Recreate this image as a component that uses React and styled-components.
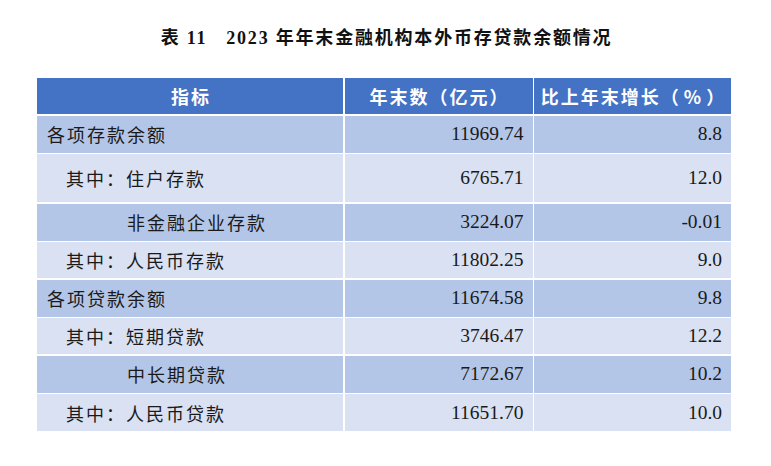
import React from 'react'
import styled, { createGlobalStyle } from 'styled-components'

const GlobalStyle = createGlobalStyle`
  html, body {
    margin: 0;
    padding: 0;
    background: #ffffff;
  }
`

const rows = [
  { label: '各项存款余额', indent: 0, value: '11969.74', growth: '8.8', dark: true, height: 37 },
  { label: '其中：住户存款', indent: 1, value: '6765.71', growth: '12.0', dark: false, height: 48 },
  { label: '非金融企业存款', indent: 2, value: '3224.07', growth: '-0.01', dark: true, height: 37 },
  { label: '其中：人民币存款', indent: 1, value: '11802.25', growth: '9.0', dark: false, height: 36 },
  { label: '各项贷款余额', indent: 0, value: '11674.58', growth: '9.8', dark: true, height: 37 },
  { label: '其中：短期贷款', indent: 1, value: '3746.47', growth: '12.2', dark: false, height: 36 },
  { label: '中长期贷款', indent: 2, value: '7172.67', growth: '10.2', dark: true, height: 37 },
  { label: '其中：人民币贷款', indent: 1, value: '11651.70', growth: '10.0', dark: false, height: 37 },
]

const indents = [10, 29, 90]

export default function App() {
  return (
    <Page>
      <GlobalStyle />
      <Title>表 11   2023 年年末金融机构本外币存贷款余额情况</Title>
      <Table>
        <Row $height={36}>
          <HeadCell>指标</HeadCell>
          <HeadCell>年末数（亿元）</HeadCell>
          <HeadCell>比上年末增长（<Pct>%</Pct>）</HeadCell>
        </Row>
        {rows.map((r) => (
          <Row key={r.label} $height={r.height}>
            <LabelCell $dark={r.dark} $indent={indents[r.indent]}>{r.label}</LabelCell>
            <NumCell $dark={r.dark}>{r.value}</NumCell>
            <NumCell $dark={r.dark}>{r.growth}</NumCell>
          </Row>
        ))}
      </Table>
    </Page>
  )
}

const Page = styled.div`
  width: 771px;
  height: 466px;
  padding-top: 26px;
  box-sizing: border-box;
`

const Title = styled.div`
  text-align: center;
  white-space: pre;
  font-family: "Liberation Serif", "Noto Sans CJK SC", serif;
  font-weight: bold;
  font-size: 18px;
  letter-spacing: 1.8px;
  line-height: 24px;
  color: #111111;
  padding-left: 2px;
`

const Table = styled.div`
  margin: 28px 0 0 37px;
  width: 694px;
  display: flex;
  flex-direction: column;
  gap: 1.5px;
`

const Row = styled.div`
  display: grid;
  grid-template-columns: 306px 188px 197px;
  gap: 1.5px;
  height: ${(p) => p.$height}px;
`

const HeadCell = styled.div`
  background: #4472c4;
  color: #ffffff;
  display: flex;
  align-items: center;
  justify-content: center;
  font-family: "Noto Sans CJK SC", sans-serif;
  font-weight: bold;
  font-size: 18px;
  letter-spacing: 2px;
  padding-left: 2px;
`

const Pct = styled.span`
  padding: 0 3px;
`

const Cell = styled.div`
  background: ${(p) => (p.$dark ? '#b4c6e7' : '#d9e1f2')};
  color: #1a1a1a;
  display: flex;
  align-items: center;
`

const LabelCell = styled(Cell)`
  padding-left: ${(p) => p.$indent}px;
  font-family: "Noto Sans CJK SC", sans-serif;
  font-size: 18px;
  letter-spacing: 2px;
`

const NumCell = styled(Cell)`
  justify-content: flex-end;
  padding-right: 9px;
  font-family: "Liberation Serif", serif;
  font-size: 19.5px;
`
